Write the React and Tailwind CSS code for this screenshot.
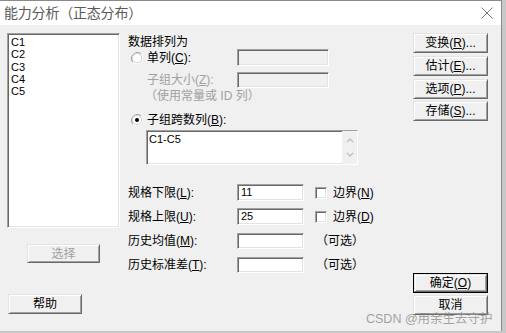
import React from "react";

const raised =
  "border border-t-[#e3e3e3] border-l-[#e3e3e3] border-r-[#696969] border-b-[#696969] shadow-[inset_1px_1px_0_#ffffff,inset_-1px_-1px_0_#a0a0a0] bg-[#f0f0f0]";
const sunken =
  "border border-t-[#a0a0a0] border-l-[#a0a0a0] border-r-white border-b-white shadow-[inset_1px_1px_0_#696969,inset_-1px_-1px_0_#e3e3e3]";

const Key = ({ k }) => <span className="underline underline-offset-1">{k}</span>;

const Radio = ({ checked }) => (
  <svg width="12" height="12" viewBox="0 0 12 12" className="shrink-0">
    <path d="M10.2 1.8 A6 6 0 0 0 1.8 10.2" fill="none" stroke="#a0a0a0" strokeWidth="1" />
    <path d="M1.8 10.2 A6 6 0 0 0 10.2 1.8" fill="none" stroke="#ffffff" strokeWidth="1" />
    <circle cx="6" cy="6" r="4.6" fill="#ffffff" stroke="#c8c8c8" strokeWidth="0.8" />
    {checked && <circle cx="6" cy="6" r="2" fill="#000000" />}
  </svg>
);

const Check = () => <div className={`w-[12px] h-[12px] bg-white shrink-0 ${sunken}`} />;

const Button = ({ children, disabled, isDefault, className = "" }) =>
  isDefault ? (
    <div className={`border border-black ${className}`}>
      <div className={`w-full h-full flex items-center justify-center ${raised}`}>{children}</div>
    </div>
  ) : (
    <div
      className={`flex items-center justify-center whitespace-nowrap ${raised} ${disabled ? "text-[#a0a0a0]" : ""} ${className}`}
    >
      {children}
    </div>
  );

const Field = ({ value, width, height, disabled }) => (
  <div
    className={`${sunken} ${disabled ? "bg-[#f0f0f0]" : "bg-white"} shrink-0 flex items-center pl-[3px] text-[11px]`}
    style={{ width, height }}
  >
    {value}
  </div>
);

const Label = ({ children, className = "" }) => (
  <div className={`w-[109px] shrink-0 whitespace-nowrap ${className}`}>{children}</div>
);

const App = () => {
  return (
    <div className="w-[506px] h-[333px] bg-[#c8c8c8] overflow-hidden font-['Liberation_Sans','Noto_Sans_CJK_SC',sans-serif] text-[12px] text-black">
      <div className="relative w-[502px] h-[331px] border-t border-r border-[#8a8a8a] flex flex-col">
        {/* title bar */}
        <div className="h-[24px] bg-white flex items-center justify-between pl-[4px] pr-[8px]">
          <span className="text-[14px] text-[#5a5a5a] tracking-[-0.2px]">能力分析（正态分布）</span>
          <svg width="12" height="12" viewBox="0 0 12 12">
            <path d="M0.5 0.5 L11.5 11.5 M11.5 0.5 L0.5 11.5" stroke="#7a7a7a" strokeWidth="1" />
          </svg>
        </div>

        <div className="flex-1 bg-[#f0f0f0] flex pl-[7px]">
          {/* left column */}
          <div className="flex flex-col w-[113px] shrink-0 pt-[8px]">
            <div className={`h-[195px] bg-white pl-[3px] pt-[2px] ${sunken}`}>
              {["C1", "C2", "C3", "C4", "C5"].map((c) => (
                <div key={c} className="text-[11px] leading-[12.3px]">
                  {c}
                </div>
              ))}
            </div>
            <Button disabled className="mt-[16px] ml-[20px] w-[73px] h-[19px]">
              选择
            </Button>
            <Button className="mt-[31px] ml-[1px] w-[74px] h-[20px]">帮助</Button>
          </div>

          {/* middle column */}
          <div className="flex flex-col ml-[8px] w-[230px] shrink-0 pt-[10px] whitespace-nowrap">
            <div className="h-[14px] leading-[14px]">数据排列为</div>
            <div className="h-[17px] flex items-center">
              <Label className="flex items-center pl-[3px] gap-[4px]">
                <Radio />
                <span>
                  单列(<Key k="C" />):
                </span>
              </Label>
              <Field disabled width={92} height={17} />
            </div>
            <div className="mt-[6px] h-[16px] flex items-center">
              <Label className="pl-[19px] text-[#a0a0a0]">
                子组大小(<Key k="Z" />):
              </Label>
              <Field disabled width={92} height={16} />
            </div>
            <div className="mt-[1px] h-[14px] leading-[14px] pl-[17px] text-[#a0a0a0]">（使用常量或 ID 列）</div>
            <div className="mt-[9px] h-[16px] flex items-center pl-[3px] gap-[4px]">
              <Radio checked />
              <span>
                子组跨数列(<Key k="B" />):
              </span>
            </div>
            <div className={`mt-[2px] ml-[18px] w-[212px] h-[35px] bg-white flex ${sunken}`}>
              <div className="flex-1 pl-[2px] pt-[2px] text-[11px] leading-[12px]">C1-C5</div>
              <div className="w-[15px] flex flex-col items-center justify-around bg-[#f0f0f0] py-[2px]">
                <svg width="8" height="6" viewBox="0 0 8 6">
                  <path d="M1 5 L4 2 L7 5" fill="none" stroke="#c0c0c0" strokeWidth="1.4" />
                </svg>
                <svg width="8" height="6" viewBox="0 0 8 6">
                  <path d="M1 1 L4 4 L7 1" fill="none" stroke="#c0c0c0" strokeWidth="1.4" />
                </svg>
              </div>
            </div>

            <div className="mt-[19px] h-[17px] flex items-center">
              <Label>
                规格下限(<Key k="L" />):
              </Label>
              <Field value="11" width={67} height={17} />
              <div className="ml-[11px] flex items-center gap-[6px] shrink-0">
                <Check />
                <span>
                  边界(<Key k="N" />)
                </span>
              </div>
            </div>
            <div className="mt-[7px] h-[17px] flex items-center">
              <Label>
                规格上限(<Key k="U" />):
              </Label>
              <Field value="25" width={67} height={17} />
              <div className="ml-[11px] flex items-center gap-[6px] shrink-0">
                <Check />
                <span>
                  边界(<Key k="D" />)
                </span>
              </div>
            </div>
            <div className="mt-[8px] h-[16px] flex items-center">
              <Label>
                历史均值(<Key k="M" />):
              </Label>
              <Field width={67} height={16} />
              <span className="ml-[12px] shrink-0">（可选）</span>
            </div>
            <div className="mt-[8px] h-[16px] flex items-center">
              <Label>
                历史标准差(<Key k="T" />):
              </Label>
              <Field width={67} height={16} />
              <span className="ml-[12px] shrink-0">（可选）</span>
            </div>
          </div>

          {/* right column */}
          <div className="flex flex-col ml-[55px] w-[75px] shrink-0 pt-[8px]">
            <Button className="h-[20px]">
              变换(<Key k="R" />)...
            </Button>
            <Button className="mt-[3px] h-[20px]">
              估计(<Key k="E" />)...
            </Button>
            <Button className="mt-[3px] h-[20px]">
              选项(<Key k="P" />)...
            </Button>
            <Button className="mt-[2px] h-[20px]">
              存储(<Key k="S" />)...
            </Button>
            <Button isDefault className="mt-[152px] h-[20px]">
              确定(<Key k="O" />)
            </Button>
            <Button className="mt-[2px] h-[20px]">取消</Button>
          </div>
        </div>

        <div className="absolute left-[366px] top-[309px] text-[12.5px] text-[#8c8c8c]/80 whitespace-nowrap pointer-events-none">
          CSDN @用余生去守护
        </div>
      </div>
    </div>
  );
};

export default App;
